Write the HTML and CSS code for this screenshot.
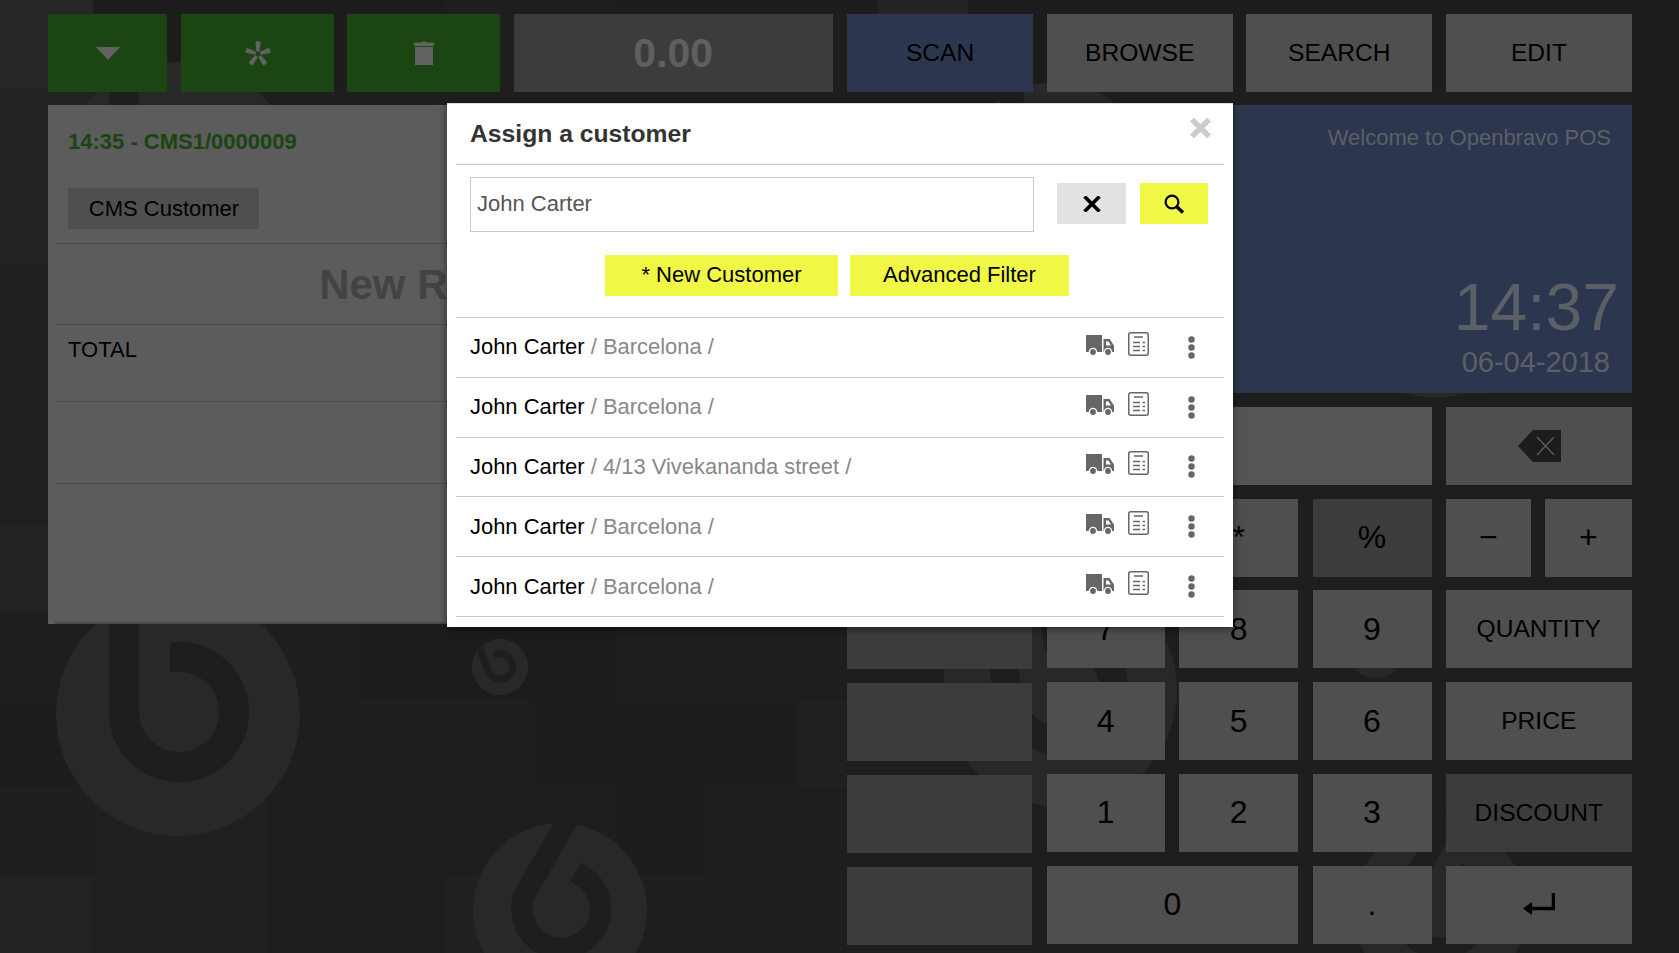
FILE: index.html
```html
<!DOCTYPE html>
<html lang="en">
<head>
    <meta charset="UTF-8">
    <meta name="viewport" content="width=device-width, initial-scale=1.0">
    <title>Openbravo POS</title>
    <link rel="stylesheet" href="styles.css">
</head>
<body>
    <!-- wallpaper: tiles and logo watermarks -->
    <svg class="wallpaper" width="1679" height="953" viewBox="0 0 1679 953">
        <defs>
            <g id="logo">
                <circle r="122" fill="#282828"/>
                <path d="M-54 -124V-2A55 55 0 1 0 1 -57H-8" fill="none" stroke="#1e1e1e" stroke-width="30"/>
            </g>
        </defs>
        <rect x="0" y="0" width="93" height="88" fill="#262626"/>
        <rect x="0" y="88" width="93" height="175" fill="#232323"/>
        <rect x="0" y="263" width="93" height="350" fill="#202020"/>
        <rect x="0" y="525" width="93" height="88" fill="#232323"/>
        <rect x="93" y="0" width="350" height="88" fill="#1c1c1c"/>
        <rect x="618" y="0" width="260" height="14" fill="#1c1c1c"/>
        <rect x="878" y="0" width="90" height="14" fill="#232323"/>
        <rect x="968" y="0" width="711" height="88" fill="#1c1c1c"/>
        <rect x="1632" y="88" width="47" height="350" fill="#1c1c1c"/>
        <rect x="0" y="700" width="93" height="88" fill="#1d1d1d"/>
        <rect x="0" y="788" width="93" height="88" fill="#1f1f1f"/>
        <rect x="0" y="875" width="93" height="78" fill="#222222"/>
        <rect x="93" y="613" width="175" height="175" fill="#212121"/>
        <rect x="93" y="788" width="175" height="165" fill="#202020"/>
        <rect x="358" y="613" width="260" height="87" fill="#1c1c1c"/>
        <rect x="530" y="700" width="265" height="88" fill="#1d1d1d"/>
        <rect x="443" y="875" width="175" height="78" fill="#202020"/>
        <rect x="618" y="788" width="88" height="88" fill="#1c1c1c"/>
        <rect x="795" y="700" width="52" height="88" fill="#202020"/>
        <use href="#logo" transform="translate(178 184)"/>
        <use href="#logo" transform="translate(178 714)"/>
        <use href="#logo" transform="translate(1055 180) scale(.8)"/>
        <use href="#logo" transform="translate(500 667) rotate(-20) scale(.23)"/>
        <use href="#logo" transform="translate(560 910) rotate(30) scale(.713)"/>
        <use href="#logo" transform="translate(1060 690) rotate(-10) scale(.96)"/>
        <use href="#logo" transform="translate(1435 300) rotate(180) scale(.8)"/>
        <use href="#logo" transform="translate(1376 650) rotate(-20) scale(.23)"/>
        <use href="#logo" transform="translate(1440 910) rotate(30) scale(.713)"/>
    </svg>

    <div class="app">
        <section class="col">
            <div class="toolbar-left">
                <button class="tile green">
                    <svg width="24" height="13" viewBox="0 0 24 13"><path d="M0 0H24L12 13Z" fill="#626262"/></svg>
                </button>
                <button class="tile green">
                    <svg class="star" width="26" height="25" viewBox="0 0 26 25" fill="#626262">
                        <path d="M10.4 0.6Q13 -0.2 15.6 0.6L14.6 10.5H11.4Z"/>
                        <path d="M10.4 0.6Q13 -0.2 15.6 0.6L14.6 10.5H11.4Z" transform="rotate(72 13 13)"/>
                        <path d="M10.4 0.6Q13 -0.2 15.6 0.6L14.6 10.5H11.4Z" transform="rotate(144 13 13)"/>
                        <path d="M10.4 0.6Q13 -0.2 15.6 0.6L14.6 10.5H11.4Z" transform="rotate(216 13 13)"/>
                        <path d="M10.4 0.6Q13 -0.2 15.6 0.6L14.6 10.5H11.4Z" transform="rotate(288 13 13)"/>
                    </svg>
                </button>
                <button class="tile green">
                    <svg width="20" height="24" viewBox="0 0 20 24" fill="#626262">
                        <path d="M0 1.5H6.5Q10 -0.5 13.5 1.5H20V5H0Z"/>
                        <path d="M1 6H19V24H1Z"/>
                    </svg>
                </button>
                <div class="tile amount">0.00</div>
            </div>

            <div class="receipt">
                <div class="receipt-head">
                    <div class="order-no">14:35 - CMS1/0000009</div>
                    <button class="customer-btn">CMS Customer</button>
                </div>
                <div class="receipt-title">New Receipt</div>
                <div class="receipt-total">TOTAL</div>
                <div class="receipt-blank"></div>
                <div class="receipt-rest"></div>
            </div>
        </section>

        <section class="col">
            <div class="toolbar-right">
                <button class="tile blue">SCAN</button>
                <button class="tile">BROWSE</button>
                <button class="tile">SEARCH</button>
                <button class="tile">EDIT</button>
            </div>

            <div class="welcome">
                <div class="welcome-text">Welcome to Openbravo POS</div>
                <div class="clock">14:37</div>
                <div class="date">06-04-2018</div>
            </div>

            <div class="keypad">
                <div class="side-keys">
                    <div class="tile dark"></div>
                    <div class="tile dark"></div>
                    <div class="tile dark"></div>
                    <div class="tile dark"></div>
                    <div class="tile dark"></div>
                    <div class="tile dark"></div>
                </div>
                <div class="keys">
                    <div class="tile display"></div>
                    <button class="tile">
                        <svg class="backspace" width="43" height="32" viewBox="0 0 43 32">
                            <path d="M0 16L15 0H43V32H15Z" fill="#1c1c1c"/>
                            <path d="M19 7L36 25M36 7L19 25" stroke="#5a5a5a" stroke-width="1.5" fill="none"/>
                        </svg>
                    </button>
                    <button class="tile num">/</button>
                    <button class="tile num">*</button>
                    <button class="tile num dark">%</button>
                    <div class="pair">
                        <button class="tile num">−</button>
                        <button class="tile num">+</button>
                    </div>
                    <button class="tile num">7</button>
                    <button class="tile num">8</button>
                    <button class="tile num">9</button>
                    <button class="tile">QUANTITY</button>
                    <button class="tile num">4</button>
                    <button class="tile num">5</button>
                    <button class="tile num">6</button>
                    <button class="tile">PRICE</button>
                    <button class="tile num">1</button>
                    <button class="tile num">2</button>
                    <button class="tile num">3</button>
                    <button class="tile dark">DISCOUNT</button>
                    <button class="tile num zero">0</button>
                    <button class="tile num">.</button>
                    <button class="tile">
                        <svg width="32" height="23" viewBox="0 0 32 23" fill="none" stroke="#000">
                            <path d="M30.5 0V15.5H5" stroke-width="3.5"/>
                            <path d="M0 15.5L9 9V22Z" fill="#000" stroke="none"/>
                        </svg>
                    </button>
                </div>
            </div>
        </section>
    </div>

    <div class="modal">
        <div class="modal-head">
            <h1>Assign a customer</h1>
            <svg class="modal-close" width="21" height="20" viewBox="0 0 21 20">
                <path d="M2 1.5L19 18.5M19 1.5L2 18.5" stroke="#cccccc" stroke-width="5.4" fill="none"/>
            </svg>
        </div>
        <div class="search-row">
            <input class="search-input" type="text" value="John Carter">
            <button class="search-btn clear">
                <svg width="18" height="16" viewBox="0 0 18 16"><path d="M1.5 0.5L16.5 15.5M16.5 0.5L1.5 15.5" stroke="#000" stroke-width="3.6" fill="none"/></svg>
            </button>
            <button class="search-btn go">
                <svg width="21" height="20" viewBox="0 0 21 20" fill="none" stroke="#000">
                    <circle cx="8" cy="8" r="6.4" stroke-width="2.2"/>
                    <path d="M12.5 12.5L19 18.5" stroke-width="3.4"/>
                </svg>
            </button>
        </div>
        <div class="action-row">
            <button class="action-btn new">* New Customer</button>
            <button class="action-btn filter">Advanced Filter</button>
        </div>
        <ul class="bp-list">
            <li><span class="bp-name">John Carter <em>/ Barcelona /</em></span><span class="bp-icons"><svg width="28" height="20" viewBox="0 0 28 20"><use href="#truck"/></svg><svg width="21" height="24" viewBox="0 0 21 24"><use href="#doc"/></svg><svg class="more" width="7" height="23" viewBox="0 0 7 23"><use href="#dots"/></svg></span></li>
            <li><span class="bp-name">John Carter <em>/ Barcelona /</em></span><span class="bp-icons"><svg width="28" height="20" viewBox="0 0 28 20"><use href="#truck"/></svg><svg width="21" height="24" viewBox="0 0 21 24"><use href="#doc"/></svg><svg class="more" width="7" height="23" viewBox="0 0 7 23"><use href="#dots"/></svg></span></li>
            <li><span class="bp-name">John Carter <em>/ 4/13 Vivekananda street /</em></span><span class="bp-icons"><svg width="28" height="20" viewBox="0 0 28 20"><use href="#truck"/></svg><svg width="21" height="24" viewBox="0 0 21 24"><use href="#doc"/></svg><svg class="more" width="7" height="23" viewBox="0 0 7 23"><use href="#dots"/></svg></span></li>
            <li><span class="bp-name">John Carter <em>/ Barcelona /</em></span><span class="bp-icons"><svg width="28" height="20" viewBox="0 0 28 20"><use href="#truck"/></svg><svg width="21" height="24" viewBox="0 0 21 24"><use href="#doc"/></svg><svg class="more" width="7" height="23" viewBox="0 0 7 23"><use href="#dots"/></svg></span></li>
            <li><span class="bp-name">John Carter <em>/ Barcelona /</em></span><span class="bp-icons"><svg width="28" height="20" viewBox="0 0 28 20"><use href="#truck"/></svg><svg width="21" height="24" viewBox="0 0 21 24"><use href="#doc"/></svg><svg class="more" width="7" height="23" viewBox="0 0 7 23"><use href="#dots"/></svg></span></li>
        </ul>
    </div>

    <!-- row icons -->
    <svg class="icon-defs" width="0" height="0">
        <defs>
            <g id="truck">
                <path d="M0 0H16V17H0Z" fill="#666"/>
                <path d="M17.5 4H23.5L28 10.5V17H17.5Z" fill="#666"/>
                <path d="M20 6.5H22.5L25 10.5H20Z" fill="#fff"/>
                <circle cx="7" cy="17" r="3.6" fill="#666" stroke="#fff" stroke-width="1.4"/>
                <circle cx="22" cy="17" r="3.6" fill="#666" stroke="#fff" stroke-width="1.4"/>
            </g>
            <g id="doc" fill="none" stroke="#666">
                <rect x="0.75" y="0.75" width="19.5" height="22.5" rx="2" stroke-width="1.5"/>
                <path d="M6 5H15M5 10.5H12M5 14.5H12M5 18.5H12" stroke-width="1.4"/>
                <path d="M14.5 10.5H17M14.5 14.5H17M14.5 18.5H17" stroke-width="1.4"/>
            </g>
            <g id="dots" fill="#666">
                <circle cx="3.5" cy="3.5" r="3.2"/>
                <circle cx="3.5" cy="11.5" r="3.2"/>
                <circle cx="3.5" cy="19.5" r="3.2"/>
            </g>
        </defs>
    </svg>
</body>
</html>
```

FILE: styles.css
```css
* {
    margin: 0;
    padding: 0;
    box-sizing: border-box;
}

body {
    position: relative;
    width: 1679px;
    height: 953px;
    background-color: #1e1e1e;
    font-family: "Liberation Sans", Arial, sans-serif;
    color: #000;
    overflow: hidden;
}

.wallpaper {
    position: absolute;
    top: 0;
    left: 0;
}

.icon-defs {
    position: absolute;
}

.app {
    position: relative;
    display: grid;
    grid-template-columns: 785px 785px;
    column-gap: 14px;
    padding: 14px 0 0 48px;
}

.col {
    display: flex;
    flex-direction: column;
}

/* buttons */
.tile {
    display: flex;
    justify-content: center;
    align-items: center;
    height: 78px;
    border: none;
    background-color: #4f4f4f;
    color: #000;
    font-family: inherit;
    font-size: 24.6px;
}

.green {
    background-color: #1b4513;
}

.blue {
    background-color: #2c374f;
}

.dark {
    background-color: #3c3c3c;
}

.num {
    font-size: 32px;
}

.star {
    margin-left: 1px;
}

.backspace {
    margin-left: 2px;
}

.toolbar-left {
    display: grid;
    grid-template-columns: 119px 153px 153px 1fr;
    column-gap: 13.5px;
}

.amount {
    background-color: #3c3c3c;
    color: #5f5f5f;
    font-size: 41px;
    font-weight: 700;
}

.toolbar-right {
    display: grid;
    grid-template-columns: repeat(4, 1fr);
    column-gap: 13.5px;
}

/* receipt */
.receipt {
    height: 519px;
    margin-top: 13px;
    padding-left: 7px;
    background-color: #5c5c5c;
    font-size: 22px;
}

.receipt-head {
    height: 139px;
    padding: 24px 0 0 13px;
    border-bottom: 1px solid #4a4a4a;
}

.order-no {
    color: #1a4512;
    font-weight: 700;
    line-height: 25px;
}

.customer-btn {
    display: block;
    width: 191px;
    height: 41px;
    margin-top: 34px;
    padding-left: 1px;
    border: none;
    background-color: #4f4f4f;
    font-family: inherit;
    font-size: 22px;
}

.receipt-title {
    height: 81px;
    border-bottom: 1px solid #4a4a4a;
    color: #434343;
    font-size: 42px;
    font-weight: 700;
    line-height: 81px;
    text-align: center;
}

.receipt-total {
    height: 77px;
    padding: 12px 0 0 13px;
    border-bottom: 1px solid #4a4a4a;
}

.receipt-blank {
    height: 82px;
    border-bottom: 1px solid #4a4a4a;
}

.receipt-rest {
    height: 140px;
    border-bottom: 2px solid #4a4a4a;
}

/* clock */
.welcome {
    height: 288px;
    margin-top: 13px;
    padding: 20px 21px 0 0;
    background-color: #2c374f;
    color: #5c5f66;
    text-align: right;
}

.welcome-text {
    font-size: 22px;
    line-height: 25px;
}

.clock {
    margin: 120px -8px 0 0;
    font-size: 66px;
    line-height: 74px;
}

.date {
    margin-right: 1px;
    font-size: 29px;
    line-height: 36px;
}

/* keypad */
.keypad {
    display: flex;
    margin-top: 14px;
    column-gap: 14.5px;
}

.side-keys {
    display: flex;
    flex-direction: column;
    flex: 0 0 185px;
    row-gap: 14px;
}

.keys {
    display: grid;
    grid-template-columns: 118.5px 119px 119px 186px;
    grid-auto-rows: 78px;
    gap: 13.75px 14.25px;
    margin-top: -0.1px;
}

.display {
    grid-column: span 3;
    background-color: #555;
}

.zero {
    grid-column: span 2;
}

.pair {
    display: grid;
    grid-template-columns: 85px 1fr;
    column-gap: 14px;
}

/* customer dialog */
.modal {
    position: absolute;
    top: 103px;
    left: 447px;
    width: 786px;
    height: 524px;
    padding: 0 9px;
    border-top: 1px solid #ddd;
    background-color: #fff;
    box-shadow: 0 2px 8px rgba(0, 0, 0, 0.5);
}

.modal-head {
    position: relative;
    height: 61px;
    padding: 15px 0 0 14px;
    border-bottom: 1px solid #ccc;
    box-shadow: inset 0 -1px #eee;
}

.modal-head h1 {
    color: #333;
    font-size: 24.7px;
    line-height: 29px;
}

.modal-close {
    position: absolute;
    top: 14px;
    right: 13px;
}

.search-row {
    display: flex;
    align-items: center;
    padding: 12px 0 0 14px;
}

.search-input {
    width: 564px;
    height: 55px;
    padding: 0 6px 2px;
    border: 1px solid #ccc;
    color: #555;
    font-family: inherit;
    font-size: 22px;
    outline: none;
}

.search-btn {
    display: flex;
    justify-content: center;
    align-items: center;
    height: 41px;
    margin-top: -2px;
    border: none;
}

.clear {
    width: 69px;
    margin-left: 23px;
    background-color: #e2e2e2;
}

.go {
    width: 68px;
    margin-left: 14px;
    background-color: #f0f745;
}

.action-row {
    display: flex;
    justify-content: center;
    column-gap: 12px;
    padding: 23px 6px 0 0;
}

.action-btn {
    height: 41px;
    padding-bottom: 2px;
    border: none;
    background-color: #f0f745;
    font-family: inherit;
    font-size: 22px;
}

.new {
    width: 233px;
}

.filter {
    width: 219px;
}

.bp-list {
    margin-top: 21px;
    border-top: 1px solid #ccc;
    list-style: none;
}

.bp-list li {
    display: flex;
    justify-content: space-between;
    align-items: center;
    height: 59.8px;
    padding: 0 0 0 14px;
    border-bottom: 1px solid #ccc;
    font-size: 21.95px;
}

.bp-list em {
    color: #888;
    font-style: normal;
}

.bp-icons {
    display: flex;
    align-items: flex-start;
    width: 138px;
    height: 24px;
    margin-top: -7px;
    column-gap: 14px;
}

.bp-icons svg:first-child {
    margin-top: 3px;
}

.bp-icons .more {
    margin: 4px 0 0 25px;
}
```
